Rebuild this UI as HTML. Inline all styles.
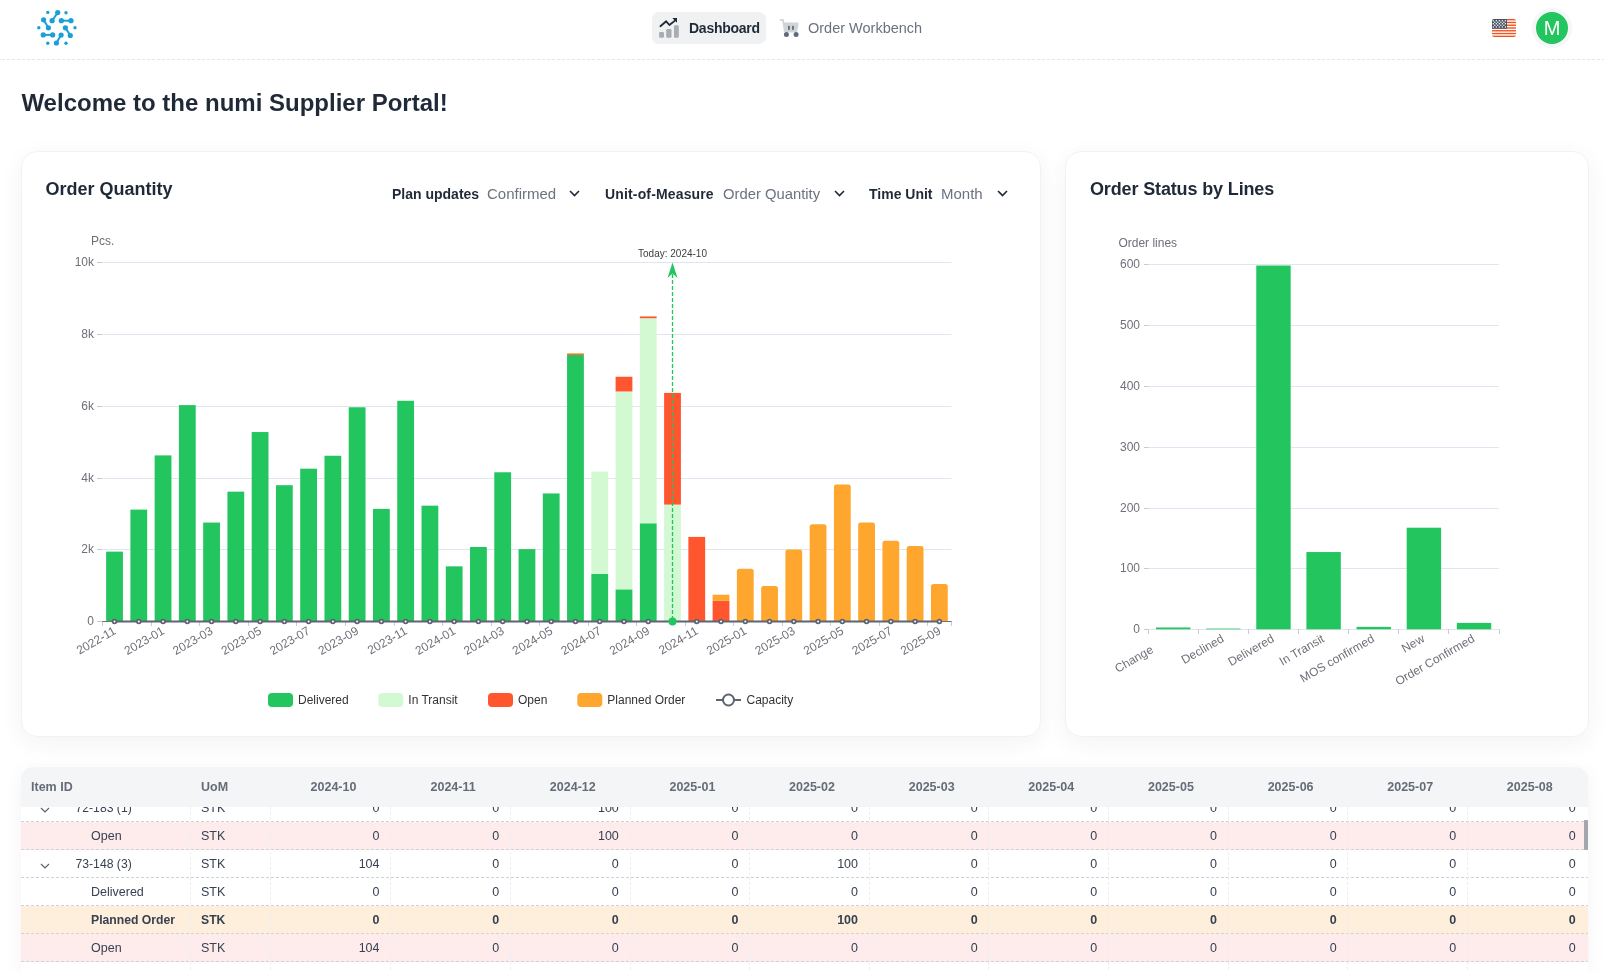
<!DOCTYPE html><html><head><meta charset="utf-8"><title>numi Supplier Portal</title><style>
*{box-sizing:border-box;margin:0;padding:0}
html,body{width:1604px;height:971px;overflow:hidden;background:#fff;font-family:"Liberation Sans",sans-serif;position:relative}
.abs{position:absolute}
.hline{position:absolute;left:0;top:59px;width:1604px;height:1px;background:repeating-linear-gradient(90deg,#e6e6e6 0 3px,transparent 3px 5px);background-position:2px 0}
.nav-active{position:absolute;left:652px;top:12px;width:114px;height:32px;border-radius:7px;background:#f0f1f3}
.card{position:absolute;top:151px;height:586px;background:#fff;border-radius:16px;border:1px solid #f0f2f5;box-shadow:0 6px 24px rgba(30,41,59,0.055)}
.ttl{position:absolute;font-weight:700;color:#1f2937;white-space:nowrap}
.ctl{position:absolute;top:186px;font-size:14px;white-space:nowrap;line-height:16px}
.ctl b{color:#1f2937}
.ctl span{color:#6b7280;font-size:15px}
.tbl{position:absolute;left:21px;top:767px;width:1567px;height:204px;overflow:hidden;background:#fff;border-radius:12px 12px 0 0;box-shadow:0 4px 20px rgba(30,41,59,0.05)}
.row{position:absolute;left:0;width:1567px;height:28px;background:#fff}
.row::after{content:"";position:absolute;left:0;right:0;bottom:0;height:1px;background:repeating-linear-gradient(90deg,#cfd3d8 0 3px,transparent 3px 5px)}
.tx{position:absolute;top:7px;font-size:12.5px;line-height:15px;color:#374151;white-space:nowrap}
.vsep{position:absolute;top:0;width:1px;height:204px;background:repeating-linear-gradient(180deg,#eceef1 0 3px,transparent 3px 5px);z-index:2}
.thead{position:absolute;left:0;top:0;width:1567px;height:40px;background:#f4f5f7;z-index:3}
.th{position:absolute;top:12.5px;font-size:12.5px;line-height:15px;font-weight:700;color:#656c78;white-space:nowrap}
.scroll{position:absolute;left:1563px;top:53px;width:4px;height:30px;background:#a3a7ad;border-radius:1px;z-index:4}
</style></head><body><div id="root" style="position:absolute;left:0;top:0;width:1604px;height:971px;will-change:transform"><div class="hline"></div>
<div class="nav-active"></div>
<div class="abs" style="left:689px;top:20px;font-size:14px;font-weight:700;color:#1f2937;line-height:16px;letter-spacing:-0.25px">Dashboard</div>
<div class="abs" style="left:808px;top:19.5px;font-size:14.5px;color:#6b7280;line-height:17px">Order Workbench</div>
<svg style="position:absolute;left:1492px;top:19px" width="24" height="18" viewBox="0 0 24 18"><defs><clipPath id="fc"><rect x="0" y="0" width="24" height="18" rx="2.2"/></clipPath></defs><g clip-path="url(#fc)"><rect width="24" height="18" fill="#fff"/><rect x="0" y="0.00" width="24" height="1.38" fill="#f4511e"/><rect x="0" y="2.77" width="24" height="1.38" fill="#f4511e"/><rect x="0" y="5.54" width="24" height="1.38" fill="#f4511e"/><rect x="0" y="8.31" width="24" height="1.38" fill="#f4511e"/><rect x="0" y="11.08" width="24" height="1.38" fill="#f4511e"/><rect x="0" y="13.85" width="24" height="1.38" fill="#f4511e"/><rect x="0" y="16.62" width="24" height="1.38" fill="#f4511e"/><rect x="0" y="0" width="15" height="9.7" fill="#465163"/><circle cx="1.30" cy="1.70" r="0.75" fill="#fff"/><circle cx="4.33" cy="1.70" r="0.75" fill="#fff"/><circle cx="7.36" cy="1.70" r="0.75" fill="#fff"/><circle cx="10.39" cy="1.70" r="0.75" fill="#fff"/><circle cx="13.42" cy="1.70" r="0.75" fill="#fff"/><circle cx="2.80" cy="3.25" r="0.75" fill="#fff"/><circle cx="5.83" cy="3.25" r="0.75" fill="#fff"/><circle cx="8.86" cy="3.25" r="0.75" fill="#fff"/><circle cx="11.89" cy="3.25" r="0.75" fill="#fff"/><circle cx="1.30" cy="4.80" r="0.75" fill="#fff"/><circle cx="4.33" cy="4.80" r="0.75" fill="#fff"/><circle cx="7.36" cy="4.80" r="0.75" fill="#fff"/><circle cx="10.39" cy="4.80" r="0.75" fill="#fff"/><circle cx="13.42" cy="4.80" r="0.75" fill="#fff"/><circle cx="2.80" cy="6.35" r="0.75" fill="#fff"/><circle cx="5.83" cy="6.35" r="0.75" fill="#fff"/><circle cx="8.86" cy="6.35" r="0.75" fill="#fff"/><circle cx="11.89" cy="6.35" r="0.75" fill="#fff"/><circle cx="1.30" cy="7.90" r="0.75" fill="#fff"/><circle cx="4.33" cy="7.90" r="0.75" fill="#fff"/><circle cx="7.36" cy="7.90" r="0.75" fill="#fff"/><circle cx="10.39" cy="7.90" r="0.75" fill="#fff"/><circle cx="13.42" cy="7.90" r="0.75" fill="#fff"/></g></svg>
<div class="abs" style="left:1532px;top:8px;width:40px;height:40px;border-radius:50%;background:#f5f6f8"></div>
<div class="abs" style="left:1536px;top:12px;width:32px;height:32px;border-radius:50%;background:#22c55e;color:#fff;font-size:20px;line-height:32px;text-align:center">M</div>
<div class="ttl" style="left:21.4px;top:88.7px;font-size:24px;line-height:28px">Welcome to the numi Supplier Portal!</div>
<div class="card" style="left:21px;width:1020px"></div>
<div class="card" style="left:1065px;width:524px"></div>
<div class="ttl" style="left:45.5px;top:179px;font-size:18px;line-height:21px">Order Quantity</div>
<div class="ttl" style="left:1090px;top:179px;font-size:18px;line-height:21px;letter-spacing:-0.14px">Order Status by Lines</div>
<div class="ctl" style="left:392px"><b>Plan updates</b></div><div class="ctl" style="left:487px"><span>Confirmed</span></div><svg class="abs" style="left:569px;top:190px" width="11" height="7" viewBox="0 0 11 7"><path d="M1 1 L5.5 5.5 L10 1" fill="none" stroke="#1f2937" stroke-width="1.6"/></svg>
<div class="ctl" style="left:605px"><b style="letter-spacing:0.15px">Unit-of-Measure</b></div><div class="ctl" style="left:723px"><span style="font-size:14.8px">Order Quantity</span></div><svg class="abs" style="left:834px;top:190px" width="11" height="7" viewBox="0 0 11 7"><path d="M1 1 L5.5 5.5 L10 1" fill="none" stroke="#1f2937" stroke-width="1.6"/></svg>
<div class="ctl" style="left:869px"><b>Time Unit</b></div><div class="ctl" style="left:941px"><span>Month</span></div><svg class="abs" style="left:997px;top:190px" width="11" height="7" viewBox="0 0 11 7"><path d="M1 1 L5.5 5.5 L10 1" fill="none" stroke="#1f2937" stroke-width="1.6"/></svg>
<svg class="abs" style="left:0;top:0;z-index:5" width="1604" height="971" viewBox="0 0 1604 971" font-family="Liberation Sans, sans-serif"><line x1="97" y1="621.5" x2="951.5" y2="621.5" stroke="#E0E6F1" stroke-width="1"/><line x1="97" y1="621.5" x2="102" y2="621.5" stroke="#c8cacd" stroke-width="1"/><text x="94" y="624.7" font-size="12" fill="#6E7079" text-anchor="end" >0</text><line x1="97" y1="549.5" x2="951.5" y2="549.5" stroke="#E0E6F1" stroke-width="1"/><line x1="97" y1="549.5" x2="102" y2="549.5" stroke="#c8cacd" stroke-width="1"/><text x="94" y="552.7" font-size="12" fill="#6E7079" text-anchor="end" >2k</text><line x1="97" y1="478.5" x2="951.5" y2="478.5" stroke="#E0E6F1" stroke-width="1"/><line x1="97" y1="478.5" x2="102" y2="478.5" stroke="#c8cacd" stroke-width="1"/><text x="94" y="481.7" font-size="12" fill="#6E7079" text-anchor="end" >4k</text><line x1="97" y1="406.5" x2="951.5" y2="406.5" stroke="#E0E6F1" stroke-width="1"/><line x1="97" y1="406.5" x2="102" y2="406.5" stroke="#c8cacd" stroke-width="1"/><text x="94" y="409.7" font-size="12" fill="#6E7079" text-anchor="end" >6k</text><line x1="97" y1="334.5" x2="951.5" y2="334.5" stroke="#E0E6F1" stroke-width="1"/><line x1="97" y1="334.5" x2="102" y2="334.5" stroke="#c8cacd" stroke-width="1"/><text x="94" y="337.7" font-size="12" fill="#6E7079" text-anchor="end" >8k</text><line x1="97" y1="262.5" x2="951.5" y2="262.5" stroke="#E0E6F1" stroke-width="1"/><line x1="97" y1="262.5" x2="102" y2="262.5" stroke="#c8cacd" stroke-width="1"/><text x="94" y="265.7" font-size="12" fill="#6E7079" text-anchor="end" >10k</text><text x="91" y="245" font-size="12" fill="#6E7079" text-anchor="start" >Pcs.</text><rect x="106.13" y="551.63" width="16.8" height="69.67" fill="#22c55e"/><rect x="130.39" y="509.62" width="16.8" height="111.68" fill="#22c55e"/><rect x="154.65" y="455.40" width="16.8" height="165.90" fill="#22c55e"/><rect x="178.91" y="405.12" width="16.8" height="216.18" fill="#22c55e"/><rect x="203.17" y="522.55" width="16.8" height="98.75" fill="#22c55e"/><rect x="227.43" y="491.66" width="16.8" height="129.64" fill="#22c55e"/><rect x="251.69" y="432.05" width="16.8" height="189.25" fill="#22c55e"/><rect x="275.95" y="485.20" width="16.8" height="136.10" fill="#22c55e"/><rect x="300.21" y="468.68" width="16.8" height="152.62" fill="#22c55e"/><rect x="324.47" y="455.75" width="16.8" height="165.55" fill="#22c55e"/><rect x="348.73" y="407.28" width="16.8" height="214.02" fill="#22c55e"/><rect x="372.99" y="508.90" width="16.8" height="112.40" fill="#22c55e"/><rect x="397.25" y="400.81" width="16.8" height="220.49" fill="#22c55e"/><rect x="421.51" y="505.67" width="16.8" height="115.63" fill="#22c55e"/><rect x="445.77" y="566.36" width="16.8" height="54.94" fill="#22c55e"/><rect x="470.03" y="546.97" width="16.8" height="74.33" fill="#22c55e"/><rect x="494.29" y="472.27" width="16.8" height="149.03" fill="#22c55e"/><rect x="518.55" y="549.12" width="16.8" height="72.18" fill="#22c55e"/><rect x="542.81" y="493.46" width="16.8" height="127.84" fill="#22c55e"/><rect x="567.07" y="354.85" width="16.8" height="266.45" fill="#22c55e"/><rect x="567.07" y="353.77" width="16.8" height="1.08" fill="#ff5630"/><rect x="567.07" y="353.05" width="16.8" height="0.72" fill="#ffa62e"/><rect x="591.33" y="573.90" width="16.8" height="47.40" fill="#22c55e"/><rect x="591.33" y="471.56" width="16.8" height="102.34" fill="#d3f9d3"/><rect x="615.59" y="589.34" width="16.8" height="31.96" fill="#22c55e"/><rect x="615.59" y="391.48" width="16.8" height="197.86" fill="#d3f9d3"/><rect x="615.59" y="376.75" width="16.8" height="14.72" fill="#ff5630"/><rect x="639.85" y="523.27" width="16.8" height="98.03" fill="#22c55e"/><rect x="639.85" y="318.22" width="16.8" height="205.05" fill="#d3f9d3"/><rect x="639.85" y="316.42" width="16.8" height="1.80" fill="#ff5630"/><rect x="664.11" y="504.59" width="16.8" height="116.71" fill="#d3f9d3"/><rect x="664.11" y="392.91" width="16.8" height="111.68" fill="#ff5630"/><rect x="688.37" y="536.91" width="16.8" height="84.39" fill="#ff5630"/><rect x="712.63" y="600.83" width="16.8" height="20.47" fill="#ff5630"/><rect x="712.63" y="594.73" width="16.8" height="6.10" fill="#ffa62e"/><path d="M736.89 621.30 V571.37 Q736.89 568.87 739.39 568.87 H751.19 Q753.69 568.87 753.69 571.37 V621.30 Z" fill="#ffa62e"/><path d="M761.15 621.30 V588.61 Q761.15 586.11 763.65 586.11 H775.45 Q777.95 586.11 777.95 588.61 V621.30 Z" fill="#ffa62e"/><path d="M785.41 621.30 V551.98 Q785.41 549.48 787.91 549.48 H799.71 Q802.21 549.48 802.21 551.98 V621.30 Z" fill="#ffa62e"/><path d="M809.67 621.30 V526.84 Q809.67 524.34 812.17 524.34 H823.97 Q826.47 524.34 826.47 526.84 V621.30 Z" fill="#ffa62e"/><path d="M833.93 621.30 V486.98 Q833.93 484.48 836.43 484.48 H848.23 Q850.73 484.48 850.73 486.98 V621.30 Z" fill="#ffa62e"/><path d="M858.19 621.30 V525.05 Q858.19 522.55 860.69 522.55 H872.49 Q874.99 522.55 874.99 525.05 V621.30 Z" fill="#ffa62e"/><path d="M882.45 621.30 V543.36 Q882.45 540.86 884.95 540.86 H896.75 Q899.25 540.86 899.25 543.36 V621.30 Z" fill="#ffa62e"/><path d="M906.71 621.30 V548.39 Q906.71 545.89 909.21 545.89 H921.01 Q923.51 545.89 923.51 548.39 V621.30 Z" fill="#ffa62e"/><path d="M930.97 621.30 V586.45 Q930.97 583.95 933.47 583.95 H945.27 Q947.77 583.95 947.77 586.45 V621.30 Z" fill="#ffa62e"/><line x1="102.5" y1="621" x2="102.5" y2="626" stroke="#ccc" stroke-width="1"/><line x1="151.5" y1="621" x2="151.5" y2="626" stroke="#ccc" stroke-width="1"/><line x1="199.5" y1="621" x2="199.5" y2="626" stroke="#ccc" stroke-width="1"/><line x1="248.5" y1="621" x2="248.5" y2="626" stroke="#ccc" stroke-width="1"/><line x1="296.5" y1="621" x2="296.5" y2="626" stroke="#ccc" stroke-width="1"/><line x1="345.5" y1="621" x2="345.5" y2="626" stroke="#ccc" stroke-width="1"/><line x1="394.5" y1="621" x2="394.5" y2="626" stroke="#ccc" stroke-width="1"/><line x1="442.5" y1="621" x2="442.5" y2="626" stroke="#ccc" stroke-width="1"/><line x1="491.5" y1="621" x2="491.5" y2="626" stroke="#ccc" stroke-width="1"/><line x1="539.5" y1="621" x2="539.5" y2="626" stroke="#ccc" stroke-width="1"/><line x1="588.5" y1="621" x2="588.5" y2="626" stroke="#ccc" stroke-width="1"/><line x1="636.5" y1="621" x2="636.5" y2="626" stroke="#ccc" stroke-width="1"/><line x1="685.5" y1="621" x2="685.5" y2="626" stroke="#ccc" stroke-width="1"/><line x1="733.5" y1="621" x2="733.5" y2="626" stroke="#ccc" stroke-width="1"/><line x1="782.5" y1="621" x2="782.5" y2="626" stroke="#ccc" stroke-width="1"/><line x1="830.5" y1="621" x2="830.5" y2="626" stroke="#ccc" stroke-width="1"/><line x1="879.5" y1="621" x2="879.5" y2="626" stroke="#ccc" stroke-width="1"/><line x1="927.5" y1="621" x2="927.5" y2="626" stroke="#ccc" stroke-width="1"/><line x1="951.5" y1="621" x2="951.5" y2="626" stroke="#ccc" stroke-width="1"/><line x1="102.4" y1="621.5" x2="951.5" y2="621.5" stroke="#6E7079" stroke-width="1"/><line x1="114.53" y1="621.5" x2="939.37" y2="621.5" stroke="#5e6470" stroke-width="2"/><circle cx="114.53" cy="621.5" r="1.9" fill="#fff" stroke="#5e6470" stroke-width="1.8"/><circle cx="138.79" cy="621.5" r="1.9" fill="#fff" stroke="#5e6470" stroke-width="1.8"/><circle cx="163.05" cy="621.5" r="1.9" fill="#fff" stroke="#5e6470" stroke-width="1.8"/><circle cx="187.31" cy="621.5" r="1.9" fill="#fff" stroke="#5e6470" stroke-width="1.8"/><circle cx="211.57" cy="621.5" r="1.9" fill="#fff" stroke="#5e6470" stroke-width="1.8"/><circle cx="235.83" cy="621.5" r="1.9" fill="#fff" stroke="#5e6470" stroke-width="1.8"/><circle cx="260.09" cy="621.5" r="1.9" fill="#fff" stroke="#5e6470" stroke-width="1.8"/><circle cx="284.35" cy="621.5" r="1.9" fill="#fff" stroke="#5e6470" stroke-width="1.8"/><circle cx="308.61" cy="621.5" r="1.9" fill="#fff" stroke="#5e6470" stroke-width="1.8"/><circle cx="332.87" cy="621.5" r="1.9" fill="#fff" stroke="#5e6470" stroke-width="1.8"/><circle cx="357.13" cy="621.5" r="1.9" fill="#fff" stroke="#5e6470" stroke-width="1.8"/><circle cx="381.39" cy="621.5" r="1.9" fill="#fff" stroke="#5e6470" stroke-width="1.8"/><circle cx="405.65" cy="621.5" r="1.9" fill="#fff" stroke="#5e6470" stroke-width="1.8"/><circle cx="429.91" cy="621.5" r="1.9" fill="#fff" stroke="#5e6470" stroke-width="1.8"/><circle cx="454.17" cy="621.5" r="1.9" fill="#fff" stroke="#5e6470" stroke-width="1.8"/><circle cx="478.43" cy="621.5" r="1.9" fill="#fff" stroke="#5e6470" stroke-width="1.8"/><circle cx="502.69" cy="621.5" r="1.9" fill="#fff" stroke="#5e6470" stroke-width="1.8"/><circle cx="526.95" cy="621.5" r="1.9" fill="#fff" stroke="#5e6470" stroke-width="1.8"/><circle cx="551.21" cy="621.5" r="1.9" fill="#fff" stroke="#5e6470" stroke-width="1.8"/><circle cx="575.47" cy="621.5" r="1.9" fill="#fff" stroke="#5e6470" stroke-width="1.8"/><circle cx="599.73" cy="621.5" r="1.9" fill="#fff" stroke="#5e6470" stroke-width="1.8"/><circle cx="623.99" cy="621.5" r="1.9" fill="#fff" stroke="#5e6470" stroke-width="1.8"/><circle cx="648.25" cy="621.5" r="1.9" fill="#fff" stroke="#5e6470" stroke-width="1.8"/><circle cx="696.77" cy="621.5" r="1.9" fill="#fff" stroke="#5e6470" stroke-width="1.8"/><circle cx="721.03" cy="621.5" r="1.9" fill="#fff" stroke="#5e6470" stroke-width="1.8"/><circle cx="745.29" cy="621.5" r="1.9" fill="#fff" stroke="#5e6470" stroke-width="1.8"/><circle cx="769.55" cy="621.5" r="1.9" fill="#fff" stroke="#5e6470" stroke-width="1.8"/><circle cx="793.81" cy="621.5" r="1.9" fill="#fff" stroke="#5e6470" stroke-width="1.8"/><circle cx="818.07" cy="621.5" r="1.9" fill="#fff" stroke="#5e6470" stroke-width="1.8"/><circle cx="842.33" cy="621.5" r="1.9" fill="#fff" stroke="#5e6470" stroke-width="1.8"/><circle cx="866.59" cy="621.5" r="1.9" fill="#fff" stroke="#5e6470" stroke-width="1.8"/><circle cx="890.85" cy="621.5" r="1.9" fill="#fff" stroke="#5e6470" stroke-width="1.8"/><circle cx="915.11" cy="621.5" r="1.9" fill="#fff" stroke="#5e6470" stroke-width="1.8"/><circle cx="939.37" cy="621.5" r="1.9" fill="#fff" stroke="#5e6470" stroke-width="1.8"/><text transform="translate(114.83,629.8) rotate(-30)" x="0" y="4" font-size="12" fill="#6E7079" text-anchor="end">2022-11</text><text transform="translate(163.35,629.8) rotate(-30)" x="0" y="4" font-size="12" fill="#6E7079" text-anchor="end">2023-01</text><text transform="translate(211.87,629.8) rotate(-30)" x="0" y="4" font-size="12" fill="#6E7079" text-anchor="end">2023-03</text><text transform="translate(260.39,629.8) rotate(-30)" x="0" y="4" font-size="12" fill="#6E7079" text-anchor="end">2023-05</text><text transform="translate(308.91,629.8) rotate(-30)" x="0" y="4" font-size="12" fill="#6E7079" text-anchor="end">2023-07</text><text transform="translate(357.43,629.8) rotate(-30)" x="0" y="4" font-size="12" fill="#6E7079" text-anchor="end">2023-09</text><text transform="translate(405.95,629.8) rotate(-30)" x="0" y="4" font-size="12" fill="#6E7079" text-anchor="end">2023-11</text><text transform="translate(454.47,629.8) rotate(-30)" x="0" y="4" font-size="12" fill="#6E7079" text-anchor="end">2024-01</text><text transform="translate(502.99,629.8) rotate(-30)" x="0" y="4" font-size="12" fill="#6E7079" text-anchor="end">2024-03</text><text transform="translate(551.51,629.8) rotate(-30)" x="0" y="4" font-size="12" fill="#6E7079" text-anchor="end">2024-05</text><text transform="translate(600.03,629.8) rotate(-30)" x="0" y="4" font-size="12" fill="#6E7079" text-anchor="end">2024-07</text><text transform="translate(648.55,629.8) rotate(-30)" x="0" y="4" font-size="12" fill="#6E7079" text-anchor="end">2024-09</text><text transform="translate(697.07,629.8) rotate(-30)" x="0" y="4" font-size="12" fill="#6E7079" text-anchor="end">2024-11</text><text transform="translate(745.59,629.8) rotate(-30)" x="0" y="4" font-size="12" fill="#6E7079" text-anchor="end">2025-01</text><text transform="translate(794.11,629.8) rotate(-30)" x="0" y="4" font-size="12" fill="#6E7079" text-anchor="end">2025-03</text><text transform="translate(842.63,629.8) rotate(-30)" x="0" y="4" font-size="12" fill="#6E7079" text-anchor="end">2025-05</text><text transform="translate(891.15,629.8) rotate(-30)" x="0" y="4" font-size="12" fill="#6E7079" text-anchor="end">2025-07</text><text transform="translate(939.67,629.8) rotate(-30)" x="0" y="4" font-size="12" fill="#6E7079" text-anchor="end">2025-09</text><line x1="672.51" y1="274" x2="672.51" y2="620" stroke="#22c55e" stroke-width="1.3" stroke-dasharray="4 2"/><path d="M672.51 262.5 L677.51 278 L672.51 273.5 L667.51 278 Z" fill="#22c55e"/><circle cx="672.51" cy="621.5" r="4" fill="#22c55e"/><text x="672.51" y="256.5" font-size="10" fill="#3a3d42" text-anchor="middle" >Today: 2024-10</text><rect x="268" y="693" width="25" height="14" rx="4" fill="#22c55e"/><text x="298" y="704" font-size="12" fill="#333" text-anchor="start" >Delivered</text><rect x="378.3" y="693" width="25" height="14" rx="4" fill="#d3f9d3"/><text x="408.3" y="704" font-size="12" fill="#333" text-anchor="start" >In Transit</text><rect x="488" y="693" width="25" height="14" rx="4" fill="#ff5630"/><text x="518" y="704" font-size="12" fill="#333" text-anchor="start" >Open</text><rect x="577.3" y="693" width="25" height="14" rx="4" fill="#ffa62e"/><text x="607.3" y="704" font-size="12" fill="#333" text-anchor="start" >Planned Order</text><line x1="716" y1="700" x2="741" y2="700" stroke="#5e6470" stroke-width="2"/><circle cx="728.5" cy="700" r="5.5" fill="#fff" stroke="#5e6470" stroke-width="2"/><text x="746.5" y="704" font-size="12" fill="#333" text-anchor="start" >Capacity</text><line x1="1144" y1="629.5" x2="1499.1" y2="629.5" stroke="#E0E6F1" stroke-width="1"/><line x1="1144" y1="629.5" x2="1148.5" y2="629.5" stroke="#c8cacd" stroke-width="1"/><text x="1140" y="632.7" font-size="12" fill="#6E7079" text-anchor="end" >0</text><line x1="1144" y1="568.5" x2="1499.1" y2="568.5" stroke="#E0E6F1" stroke-width="1"/><line x1="1144" y1="568.5" x2="1148.5" y2="568.5" stroke="#c8cacd" stroke-width="1"/><text x="1140" y="571.7" font-size="12" fill="#6E7079" text-anchor="end" >100</text><line x1="1144" y1="508.5" x2="1499.1" y2="508.5" stroke="#E0E6F1" stroke-width="1"/><line x1="1144" y1="508.5" x2="1148.5" y2="508.5" stroke="#c8cacd" stroke-width="1"/><text x="1140" y="511.7" font-size="12" fill="#6E7079" text-anchor="end" >200</text><line x1="1144" y1="447.5" x2="1499.1" y2="447.5" stroke="#E0E6F1" stroke-width="1"/><line x1="1144" y1="447.5" x2="1148.5" y2="447.5" stroke="#c8cacd" stroke-width="1"/><text x="1140" y="450.7" font-size="12" fill="#6E7079" text-anchor="end" >300</text><line x1="1144" y1="386.5" x2="1499.1" y2="386.5" stroke="#E0E6F1" stroke-width="1"/><line x1="1144" y1="386.5" x2="1148.5" y2="386.5" stroke="#c8cacd" stroke-width="1"/><text x="1140" y="389.7" font-size="12" fill="#6E7079" text-anchor="end" >400</text><line x1="1144" y1="325.5" x2="1499.1" y2="325.5" stroke="#E0E6F1" stroke-width="1"/><line x1="1144" y1="325.5" x2="1148.5" y2="325.5" stroke="#c8cacd" stroke-width="1"/><text x="1140" y="328.7" font-size="12" fill="#6E7079" text-anchor="end" >500</text><line x1="1144" y1="264.5" x2="1499.1" y2="264.5" stroke="#E0E6F1" stroke-width="1"/><line x1="1144" y1="264.5" x2="1148.5" y2="264.5" stroke="#c8cacd" stroke-width="1"/><text x="1140" y="267.7" font-size="12" fill="#6E7079" text-anchor="end" >600</text><text x="1118.4" y="247" font-size="12" fill="#6E7079" text-anchor="start" >Order lines</text><rect x="1155.97" y="627.48" width="34.4" height="1.82" fill="#22c55e"/><rect x="1206.11" y="628.57" width="34.4" height="0.73" fill="#22c55e"/><rect x="1256.26" y="265.54" width="34.4" height="363.76" fill="#22c55e"/><rect x="1306.40" y="552.05" width="34.4" height="77.25" fill="#22c55e"/><rect x="1356.54" y="626.87" width="34.4" height="2.43" fill="#22c55e"/><rect x="1406.69" y="527.71" width="34.4" height="101.59" fill="#22c55e"/><rect x="1456.83" y="622.91" width="34.4" height="6.39" fill="#22c55e"/><line x1="1148.5" y1="629" x2="1148.5" y2="634" stroke="#ccc" stroke-width="1"/><line x1="1198.5" y1="629" x2="1198.5" y2="634" stroke="#ccc" stroke-width="1"/><line x1="1248.5" y1="629" x2="1248.5" y2="634" stroke="#ccc" stroke-width="1"/><line x1="1298.5" y1="629" x2="1298.5" y2="634" stroke="#ccc" stroke-width="1"/><line x1="1348.5" y1="629" x2="1348.5" y2="634" stroke="#ccc" stroke-width="1"/><line x1="1398.5" y1="629" x2="1398.5" y2="634" stroke="#ccc" stroke-width="1"/><line x1="1448.5" y1="629" x2="1448.5" y2="634" stroke="#ccc" stroke-width="1"/><line x1="1499.5" y1="629" x2="1499.5" y2="634" stroke="#ccc" stroke-width="1"/><text transform="translate(1152.17,648.5) rotate(-30)" x="0" y="4" font-size="12" fill="#6E7079" text-anchor="end">Change</text><text transform="translate(1222.81,637.5) rotate(-30)" x="0" y="4" font-size="12" fill="#6E7079" text-anchor="end">Declined</text><text transform="translate(1272.96,637.5) rotate(-30)" x="0" y="4" font-size="12" fill="#6E7079" text-anchor="end">Delivered</text><text transform="translate(1323.10,637.5) rotate(-30)" x="0" y="4" font-size="12" fill="#6E7079" text-anchor="end">In Transit</text><text transform="translate(1373.24,637.5) rotate(-30)" x="0" y="4" font-size="12" fill="#6E7079" text-anchor="end">MOS confirmed</text><text transform="translate(1423.39,637.5) rotate(-30)" x="0" y="4" font-size="12" fill="#6E7079" text-anchor="end">New</text><text transform="translate(1473.53,637.5) rotate(-30)" x="0" y="4" font-size="12" fill="#6E7079" text-anchor="end">Order Confirmed</text><circle cx="47.8" cy="12.4" r="1.7" fill="#1a9fd9"/><circle cx="66" cy="12.7" r="1.7" fill="#1a9fd9"/><circle cx="38.8" cy="27.8" r="1.7" fill="#1a9fd9"/><circle cx="75" cy="27.8" r="1.7" fill="#1a9fd9"/><circle cx="47.8" cy="43.2" r="1.7" fill="#1a9fd9"/><circle cx="66" cy="43.2" r="1.7" fill="#1a9fd9"/><line x1="57.7" y1="12.6" x2="52.1" y2="20.7" stroke="#1a9fd9" stroke-width="2"/><circle cx="57.7" cy="12.6" r="2.6" fill="#1a9fd9"/><circle cx="52.1" cy="20.7" r="2.6" fill="#1a9fd9"/><line x1="43.6" y1="19.8" x2="48.4" y2="27.8" stroke="#1a9fd9" stroke-width="2"/><circle cx="43.6" cy="19.8" r="2.6" fill="#1a9fd9"/><circle cx="48.4" cy="27.8" r="2.6" fill="#1a9fd9"/><line x1="61.3" y1="20.7" x2="71" y2="20.7" stroke="#1a9fd9" stroke-width="2"/><circle cx="61.3" cy="20.7" r="2.6" fill="#1a9fd9"/><circle cx="71" cy="20.7" r="2.6" fill="#1a9fd9"/><line x1="65.4" y1="27.8" x2="70.3" y2="35.5" stroke="#1a9fd9" stroke-width="2"/><circle cx="65.4" cy="27.8" r="2.6" fill="#1a9fd9"/><circle cx="70.3" cy="35.5" r="2.6" fill="#1a9fd9"/><line x1="43.2" y1="34.9" x2="52.7" y2="34.9" stroke="#1a9fd9" stroke-width="2"/><circle cx="43.2" cy="34.9" r="2.6" fill="#1a9fd9"/><circle cx="52.7" cy="34.9" r="2.6" fill="#1a9fd9"/><line x1="61.1" y1="35" x2="56.4" y2="43" stroke="#1a9fd9" stroke-width="2"/><circle cx="61.1" cy="35" r="2.6" fill="#1a9fd9"/><circle cx="56.4" cy="43" r="2.6" fill="#1a9fd9"/><rect x="659.1" y="32" width="4.9" height="5.8" rx="1.2" fill="#a9adb3"/><rect x="666.2" y="29" width="5.3" height="8.8" rx="1.2" fill="#a9adb3"/><rect x="674" y="25.3" width="4.8" height="12.5" rx="1.2" fill="#a9adb3"/><polyline points="660.4,26.2 666.2,21.3 669.4,25 675,20.6" fill="none" stroke="#1f2937" stroke-width="1.8" stroke-linejoin="round" stroke-linecap="round"/><path d="M672.3 18.1 L677 18.1 L677 22.8 Z" fill="#1f2937"/><path d="M780.6 19.9 H783 L784.8 31.2" fill="none" stroke="#d1d4d7" stroke-width="1.8" stroke-linecap="round" stroke-linejoin="round"/><path d="M783.6 22.6 H797.8 Q798.8 22.6 798.6 23.6 L797.3 31.4 Q797.1 32.4 796.1 32.4 H785.6 Z" fill="#d1d4d7"/><rect x="788" y="25.8" width="1.8" height="4.3" rx="0.8" fill="#5f6b7a"/><rect x="792.1" y="25.8" width="1.8" height="4.3" rx="0.8" fill="#5f6b7a"/><circle cx="786.4" cy="34.4" r="2.5" fill="#5f6b7a"/><circle cx="796.1" cy="34.4" r="2.5" fill="#5f6b7a"/></svg>
<div class="tbl"><div class="thead"><div class="th" style="left:10px">Item ID</div><div class="th" style="left:180px">UoM</div><div class="th" style="left:272.5px;width:80px;text-align:center">2024-10</div><div class="th" style="left:392.1px;width:80px;text-align:center">2024-11</div><div class="th" style="left:511.8px;width:80px;text-align:center">2024-12</div><div class="th" style="left:631.4px;width:80px;text-align:center">2025-01</div><div class="th" style="left:751.0px;width:80px;text-align:center">2025-02</div><div class="th" style="left:870.7px;width:80px;text-align:center">2025-03</div><div class="th" style="left:990.3px;width:80px;text-align:center">2025-04</div><div class="th" style="left:1109.9px;width:80px;text-align:center">2025-05</div><div class="th" style="left:1229.6px;width:80px;text-align:center">2025-06</div><div class="th" style="left:1349.2px;width:80px;text-align:center">2025-07</div><div class="th" style="left:1468.8px;width:80px;text-align:center">2025-08</div></div><div class="row" style="top:27px;background:#fff"><svg class="chev" style="position:absolute;left:19px;top:12.5px" width="10" height="7" viewBox="0 0 10 7"><path d="M1 1 L5 5 L9 1" fill="none" stroke="#5b6370" stroke-width="1.2"/></svg><div class="tx" style="left:54.5px;font-weight:400;font-size:12.2px">72-183 (1)</div><div class="tx" style="left:180px;font-weight:400;">STK</div><div class="tx num" style="right:1208.5px;font-weight:400">0</div><div class="tx num" style="right:1088.8px;font-weight:400">0</div><div class="tx num" style="right:969.2px;font-weight:400">100</div><div class="tx num" style="right:849.6px;font-weight:400">0</div><div class="tx num" style="right:730.0px;font-weight:400">0</div><div class="tx num" style="right:610.3px;font-weight:400">0</div><div class="tx num" style="right:490.7px;font-weight:400">0</div><div class="tx num" style="right:371.1px;font-weight:400">0</div><div class="tx num" style="right:251.4px;font-weight:400">0</div><div class="tx num" style="right:131.8px;font-weight:400">0</div><div class="tx num" style="right:12.2px;font-weight:400">0</div></div><div class="row" style="top:55px;background:#fdeceb"><div class="tx" style="left:70px;font-weight:400;">Open</div><div class="tx" style="left:180px;font-weight:400;">STK</div><div class="tx num" style="right:1208.5px;font-weight:400">0</div><div class="tx num" style="right:1088.8px;font-weight:400">0</div><div class="tx num" style="right:969.2px;font-weight:400">100</div><div class="tx num" style="right:849.6px;font-weight:400">0</div><div class="tx num" style="right:730.0px;font-weight:400">0</div><div class="tx num" style="right:610.3px;font-weight:400">0</div><div class="tx num" style="right:490.7px;font-weight:400">0</div><div class="tx num" style="right:371.1px;font-weight:400">0</div><div class="tx num" style="right:251.4px;font-weight:400">0</div><div class="tx num" style="right:131.8px;font-weight:400">0</div><div class="tx num" style="right:12.2px;font-weight:400">0</div></div><div class="row" style="top:83px;background:#fff"><svg class="chev" style="position:absolute;left:19px;top:12.5px" width="10" height="7" viewBox="0 0 10 7"><path d="M1 1 L5 5 L9 1" fill="none" stroke="#5b6370" stroke-width="1.2"/></svg><div class="tx" style="left:54.5px;font-weight:400;font-size:12.2px">73-148 (3)</div><div class="tx" style="left:180px;font-weight:400;">STK</div><div class="tx num" style="right:1208.5px;font-weight:400">104</div><div class="tx num" style="right:1088.8px;font-weight:400">0</div><div class="tx num" style="right:969.2px;font-weight:400">0</div><div class="tx num" style="right:849.6px;font-weight:400">0</div><div class="tx num" style="right:730.0px;font-weight:400">100</div><div class="tx num" style="right:610.3px;font-weight:400">0</div><div class="tx num" style="right:490.7px;font-weight:400">0</div><div class="tx num" style="right:371.1px;font-weight:400">0</div><div class="tx num" style="right:251.4px;font-weight:400">0</div><div class="tx num" style="right:131.8px;font-weight:400">0</div><div class="tx num" style="right:12.2px;font-weight:400">0</div></div><div class="row" style="top:111px;background:#fff"><div class="tx" style="left:70px;font-weight:400;">Delivered</div><div class="tx" style="left:180px;font-weight:400;">STK</div><div class="tx num" style="right:1208.5px;font-weight:400">0</div><div class="tx num" style="right:1088.8px;font-weight:400">0</div><div class="tx num" style="right:969.2px;font-weight:400">0</div><div class="tx num" style="right:849.6px;font-weight:400">0</div><div class="tx num" style="right:730.0px;font-weight:400">0</div><div class="tx num" style="right:610.3px;font-weight:400">0</div><div class="tx num" style="right:490.7px;font-weight:400">0</div><div class="tx num" style="right:371.1px;font-weight:400">0</div><div class="tx num" style="right:251.4px;font-weight:400">0</div><div class="tx num" style="right:131.8px;font-weight:400">0</div><div class="tx num" style="right:12.2px;font-weight:400">0</div></div><div class="row" style="top:139px;background:#feefdc"><div class="tx" style="left:70px;font-weight:700;font-size:12.2px;">Planned Order</div><div class="tx" style="left:180px;font-weight:700;font-size:12.2px;">STK</div><div class="tx num" style="right:1208.5px;font-weight:700">0</div><div class="tx num" style="right:1088.8px;font-weight:700">0</div><div class="tx num" style="right:969.2px;font-weight:700">0</div><div class="tx num" style="right:849.6px;font-weight:700">0</div><div class="tx num" style="right:730.0px;font-weight:700">100</div><div class="tx num" style="right:610.3px;font-weight:700">0</div><div class="tx num" style="right:490.7px;font-weight:700">0</div><div class="tx num" style="right:371.1px;font-weight:700">0</div><div class="tx num" style="right:251.4px;font-weight:700">0</div><div class="tx num" style="right:131.8px;font-weight:700">0</div><div class="tx num" style="right:12.2px;font-weight:700">0</div></div><div class="row" style="top:167px;background:#fdeceb"><div class="tx" style="left:70px;font-weight:400;">Open</div><div class="tx" style="left:180px;font-weight:400;">STK</div><div class="tx num" style="right:1208.5px;font-weight:400">104</div><div class="tx num" style="right:1088.8px;font-weight:400">0</div><div class="tx num" style="right:969.2px;font-weight:400">0</div><div class="tx num" style="right:849.6px;font-weight:400">0</div><div class="tx num" style="right:730.0px;font-weight:400">0</div><div class="tx num" style="right:610.3px;font-weight:400">0</div><div class="tx num" style="right:490.7px;font-weight:400">0</div><div class="tx num" style="right:371.1px;font-weight:400">0</div><div class="tx num" style="right:251.4px;font-weight:400">0</div><div class="tx num" style="right:131.8px;font-weight:400">0</div><div class="tx num" style="right:12.2px;font-weight:400">0</div></div><div class="row" style="top:195px;background:#fff"><div class="tx" style="left:70px;font-weight:400;"></div><div class="tx num" style="right:1208.5px;font-weight:400"></div><div class="tx num" style="right:1088.8px;font-weight:400"></div><div class="tx num" style="right:969.2px;font-weight:400"></div><div class="tx num" style="right:849.6px;font-weight:400"></div><div class="tx num" style="right:730.0px;font-weight:400"></div><div class="tx num" style="right:610.3px;font-weight:400"></div><div class="tx num" style="right:490.7px;font-weight:400"></div><div class="tx num" style="right:371.1px;font-weight:400"></div><div class="tx num" style="right:251.4px;font-weight:400"></div><div class="tx num" style="right:131.8px;font-weight:400"></div><div class="tx num" style="right:12.2px;font-weight:400"></div></div><div class="vsep" style="left:169px"></div><div class="vsep" style="left:249px"></div><div class="vsep" style="left:369px"></div><div class="vsep" style="left:489px"></div><div class="vsep" style="left:609px"></div><div class="vsep" style="left:728px"></div><div class="vsep" style="left:848px"></div><div class="vsep" style="left:967px"></div><div class="vsep" style="left:1087px"></div><div class="vsep" style="left:1207px"></div><div class="vsep" style="left:1326px"></div><div class="vsep" style="left:1446px"></div><div class="scroll"></div></div></div></body></html>
